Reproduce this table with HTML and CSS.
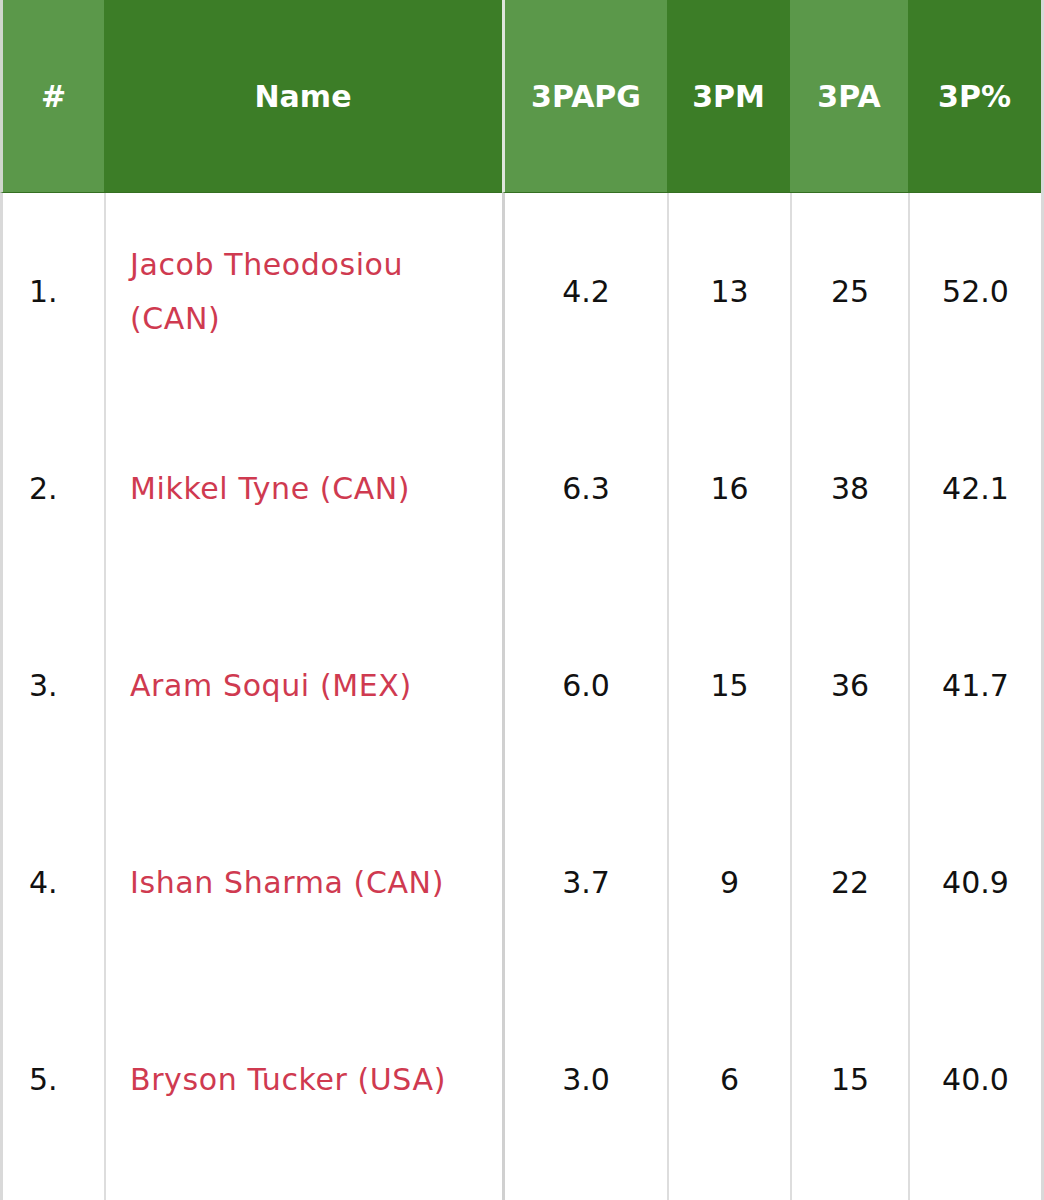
FILE: index.html
```html
<!DOCTYPE html>
<html>
<head>
<meta charset="utf-8">
<link rel="stylesheet" href="styles.css">
</head>
<body>
<table class="stats">
  <colgroup>
    <col class="c-rank">
    <col class="c-name">
    <col class="c-apg">
    <col class="c-pm">
    <col class="c-pa">
    <col class="c-pct">
  </colgroup>
  <thead>
    <tr>
      <th class="light first">#</th>
      <th class="dark">Name</th>
      <th class="light split">3PAPG</th>
      <th class="dark">3PM</th>
      <th class="light">3PA</th>
      <th class="dark">3P%</th>
    </tr>
  </thead>
  <tbody>
    <tr>
      <td class="rank first">1.</td>
      <td class="name"><a>Jacob Theodosiou (CAN)</a></td>
      <td class="num split">4.2</td>
      <td class="num">13</td>
      <td class="num">25</td>
      <td class="num">52.0</td>
    </tr>
    <tr>
      <td class="rank first">2.</td>
      <td class="name"><a>Mikkel Tyne (CAN)</a></td>
      <td class="num split">6.3</td>
      <td class="num">16</td>
      <td class="num">38</td>
      <td class="num">42.1</td>
    </tr>
    <tr>
      <td class="rank first">3.</td>
      <td class="name"><a>Aram Soqui (MEX)</a></td>
      <td class="num split">6.0</td>
      <td class="num">15</td>
      <td class="num">36</td>
      <td class="num">41.7</td>
    </tr>
    <tr>
      <td class="rank first">4.</td>
      <td class="name"><a>Ishan Sharma (CAN)</a></td>
      <td class="num split">3.7</td>
      <td class="num">9</td>
      <td class="num">22</td>
      <td class="num">40.9</td>
    </tr>
    <tr>
      <td class="rank first">5.</td>
      <td class="name"><a>Bryson Tucker (USA)</a></td>
      <td class="num split">3.0</td>
      <td class="num">6</td>
      <td class="num">15</td>
      <td class="num">40.0</td>
    </tr>
    <tr class="spacer">
      <td class="first"></td>
      <td></td>
      <td class="split"></td>
      <td></td>
      <td></td>
      <td></td>
    </tr>
  </tbody>
</table>
</body>
</html>
```

FILE: styles.css
```css
html, body {
  margin: 0;
  padding: 0;
  background: #ffffff;
}

body {
  font-family: "DejaVu Sans", Verdana, sans-serif;
  font-size: 30px;
  color: #111111;
}

.stats {
  width: 1044px;
  table-layout: fixed;
  border-collapse: separate;
  border-spacing: 0;
  border-right: 3px solid #d9d9d9;
}

.c-rank { width: 104px; }
.c-name { width: 398px; }
.c-apg  { width: 165px; }
.c-pm   { width: 123px; }
.c-pa   { width: 118px; }
.c-pct  { width: 133px; }

.stats th {
  height: 192px;
  padding: 0;
  color: #ffffff;
  font-weight: bold;
  text-align: center;
  vertical-align: middle;
  border-bottom: 1px solid #346f21;
}

.stats th.light { background: #5b984a; }
.stats th.dark  { background: #3c7d27; }

.stats th.first { border-left: 3px solid #cfd6cc; }
.stats th.split { border-left: 3px solid #dfe6dc; }

.stats td {
  height: 197px;
  padding: 0;
  vertical-align: middle;
  border-left: 2px solid #dddddd;
  line-height: 54px;
}

.stats td.first { border-left: 3px solid #d9d9d9; }
.stats td.split { border-left: 3px solid #d0d0d0; }

.stats td.rank {
  padding-left: 26px;
  text-align: left;
}

.stats td.name {
  padding: 0 24px;
  text-align: left;
  letter-spacing: 0.6px;
}

.name a {
  color: #cf3a50;
  text-decoration: none;
}

.num {
  text-align: center;
  padding-top: 2px;
}
```
